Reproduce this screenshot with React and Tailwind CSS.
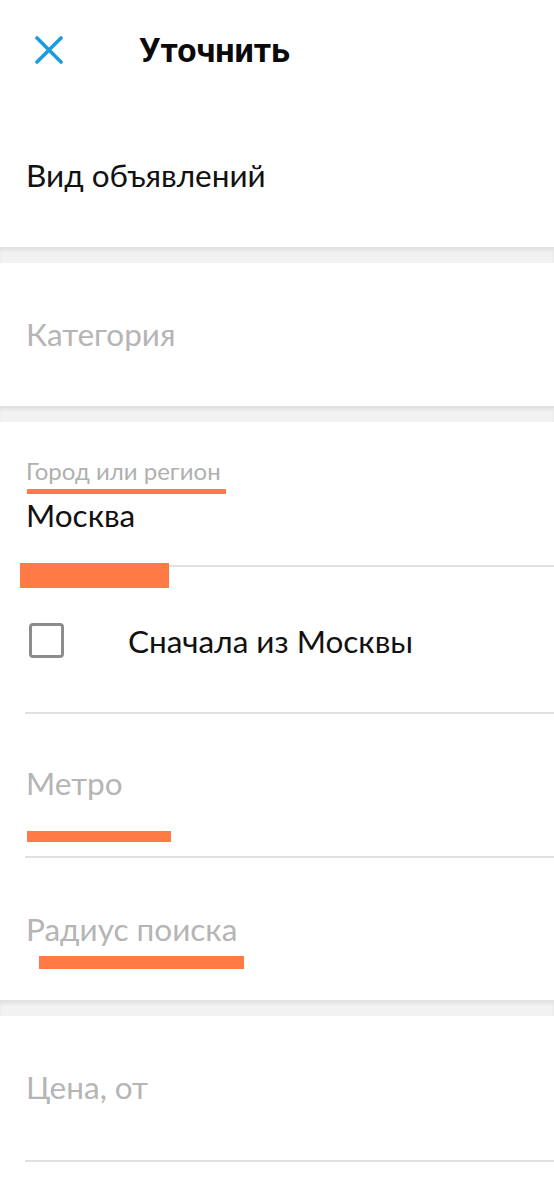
import React from 'react'

const lato = { fontFamily: 'Lato, "Noto Sans", sans-serif' }

function Band() {
  return (
    <div className="h-[16px] bg-[#f2f2f2] border-t-[2px] border-[#e2e2e2] shadow-[inset_0_2px_3px_rgba(0,0,0,0.06)]" />
  )
}

function Line({ className = '' }) {
  return <div className={'ml-[25px] h-[2px] bg-[#e0e0e0] ' + className} />
}

export default function App() {
  return (
    <div className="w-[554px] h-[1200px] bg-white overflow-hidden font-['Lato',sans-serif]">
      {/* header */}
      <header className="h-[100px] flex items-center pl-[35px]">
        <svg width="28" height="28" viewBox="0 0 28 28" className="shrink-0">
          <path d="M2 2 L26 26 M26 2 L2 26" stroke="#1d9be2" strokeWidth="3.6" strokeLinecap="round" />
        </svg>
        <h1 className="ml-[76px] text-[34px] font-bold text-[#0a0a0a] font-['Roboto',sans-serif] tracking-[0px] leading-none">Уточнить</h1>
      </header>

      <div className="h-[147px] pl-[26px] pt-[55px]">
        <div className="text-[31.5px] leading-[40px] text-[#111]" style={lato}>Вид объявлений</div>
      </div>

      <Band />

      <div className="h-[143px] pl-[26px] pt-[51px]">
        <div className="text-[31.5px] leading-[40px] text-[#b5b5b5]" style={lato}>Категория</div>
      </div>

      <Band />

      {/* location block */}
      <div className="pt-[35px]">
        <div className="pl-[26px]">
          <div className="text-[24px] leading-[28px] text-[#b0b0b0]" style={lato}>Город или регион</div>
          <div className="h-[5px] w-[199px] bg-[#ff7a45] mt-[4px] ml-[1px]" />
          <div className="text-[31.5px] leading-[40px] text-[#111] mt-[1px]" style={lato}>Москва</div>
        </div>
        <div className="flex items-start mt-[28px] pl-[20px]">
          <div className="w-[149px] h-[25px] bg-[#ff7a45]" />
          <div className="flex-1 h-[2px] mt-[2px] bg-[#e0e0e0]" />
        </div>

        <div className="flex items-center h-[35px] pl-[29px] mt-[35px]">
          <div className="w-[35px] h-[35px] shrink-0 rounded-[4px] border-[3px] border-[#8c8c8c]" />
          <span className="ml-[64px] text-[31.5px] leading-[40px] text-[#111]" style={lato}>Сначала из Москвы</span>
        </div>
        <Line className="mt-[54px]" />

        <div className="pl-[26px] pt-[49px]">
          <div className="text-[31.5px] leading-[40px] text-[#b5b5b5]" style={lato}>Метро</div>
          <div className="h-[11px] w-[144px] bg-[#ff7a45] mt-[28px] ml-[1px]" />
        </div>
        <Line className="mt-[14px]" />

        <div className="pl-[26px] pt-[51px]">
          <div className="text-[31.5px] leading-[40px] text-[#b5b5b5]" style={lato}>Радиус поиска</div>
          <div className="h-[13px] w-[205px] bg-[#ff7a45] mt-[7px] ml-[13px]" />
        </div>
        <div className="h-[31px]" />
      </div>

      <Band />

      <div className="pl-[26px] pt-[51px]">
        <div className="text-[31.5px] leading-[40px] text-[#b5b5b5]" style={lato}>Цена, от</div>
      </div>
      <Line className="mt-[53px]" />
    </div>
  )
}
